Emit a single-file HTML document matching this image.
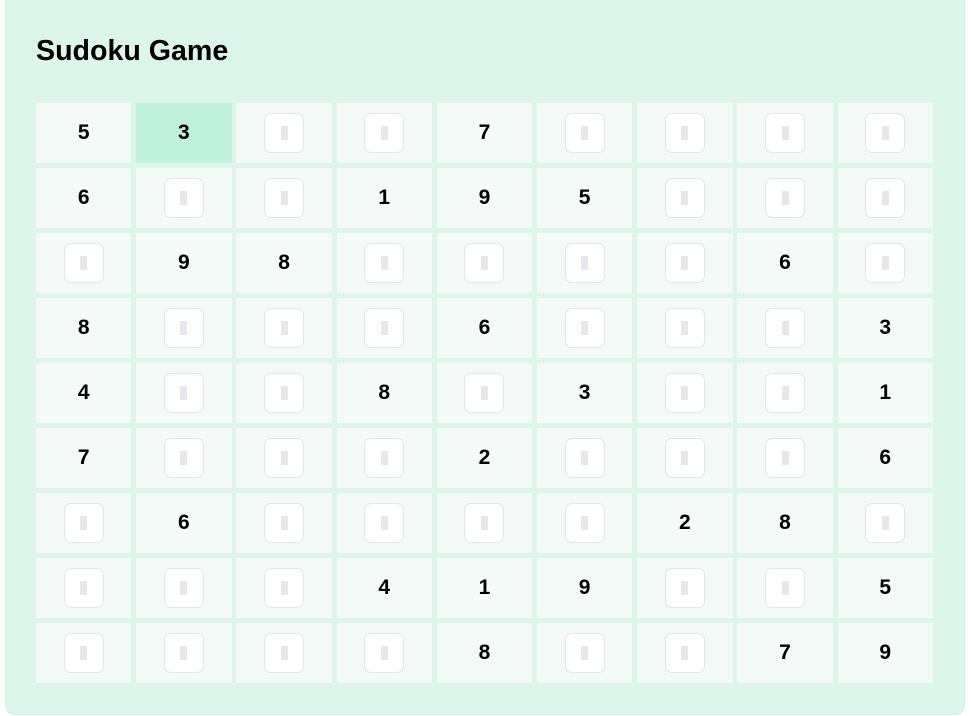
<!DOCTYPE html>
<html><head><style>
body{margin:0;background:#fff;font-family:"Liberation Sans",sans-serif;}
.c{position:absolute;left:5px;top:-8px;width:958px;height:721px;background:#dcf6ec;border-radius:10px;border:1px solid #d3eee3;}
h1{position:absolute;left:36px;top:35px;margin:0;font-size:28.6px;font-weight:bold;color:#000;}
.g{position:absolute;left:36px;top:103px;display:grid;grid-template-columns:repeat(9,95.4px);grid-template-rows:repeat(9,60px);column-gap:4.8px;row-gap:5px;}
.g div{background:#f3faf7;display:flex;align-items:center;justify-content:center;font-weight:bold;font-size:21px;}
.g div.h{background:#bff0da;}
.i{width:38px;height:38px;border:1px solid #e2e6e4;border-radius:7px;background:#fff;display:flex;align-items:center;justify-content:center;}
.i::after{content:"";width:7px;height:14px;background:#e6e6ec;}
</style></head><body>
<div class="c"></div>
<h1>Sudoku Game</h1>
<div class="g" id="g"></div>
<script>
var p=["53..7....","6..195...",".98....6.","8...6...3","4..8.3..1","7...2...6",".6....28.","...419..5","....8..79"];
var h="";p.forEach(function(r,ri){for(var i=0;i<9;i++){var ch=r[i];h+=ch=="."?'<div><span class="i"></span></div>':'<div'+(ri==0&&i==1?' class="h"':'')+'>'+ch+'</div>';}});
document.getElementById("g").innerHTML=h;
</script>
</body></html>
